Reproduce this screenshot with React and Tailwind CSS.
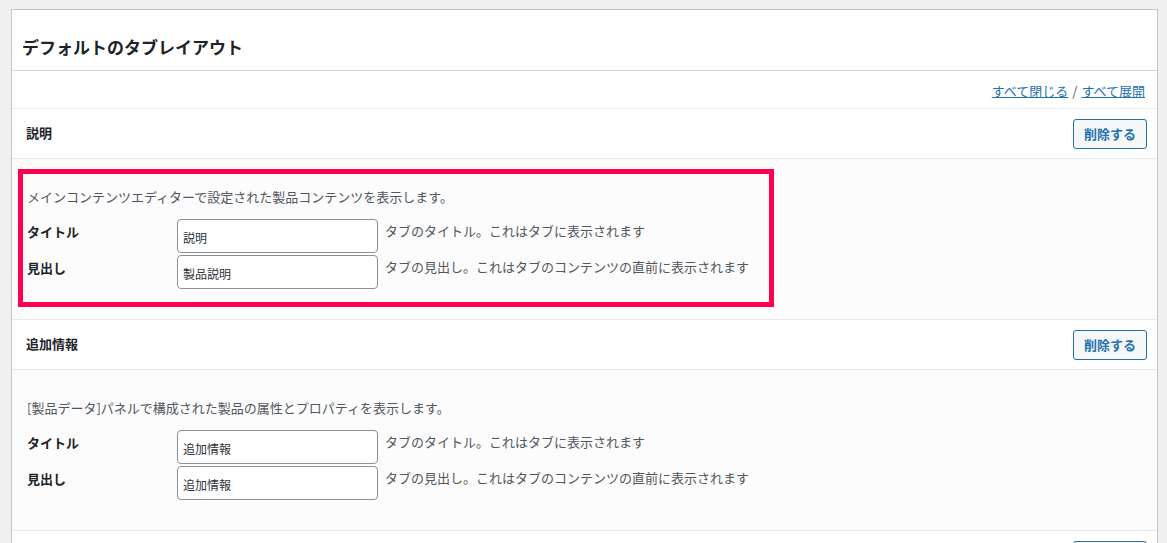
import React from "react";

const font = { fontFamily: '"Noto Sans CJK JP", "Noto Sans", sans-serif' };

function Row({ label, value, help }) {
  return (
    <div className="flex items-start">
      <div className="w-[150px] shrink-0 pt-[3px] text-[13px] leading-[20px] font-bold text-[#1d2327]">
        {label}
      </div>
      <input
        readOnly
        value={value}
        className="w-[201px] h-[34px] shrink-0 border border-[#8c8f94] rounded-[4px] bg-white px-[5px] pt-[2px] text-[12px] text-[#2c3338] outline-none"
        style={font}
      />
      <div className="ml-[7px] pt-[2px] text-[13px] leading-[20px] text-[#50575e]">{help}</div>
    </div>
  );
}

function Section({ title, desc, titleValue, headingValue, highlight }) {
  return (
    <div>
      <div className="h-[50px] flex items-center justify-between pl-[14px] pr-[10px] border-b border-[#e8e8e8] bg-white">
        <div className="text-[13px] leading-[20px] font-bold text-[#1d2327] -mt-[2px]">{title}</div>
        <button className="h-[30px] px-[10px] border border-[#2271b1] rounded-[3px] bg-[#f6f7f7] text-[13px] font-bold text-[#2271b1] leading-[20px]">
          削除する
        </button>
      </div>
      <div className="relative bg-[#fcfcfc] border-b border-[#e8e8e8] pl-[15px] pt-[28px] pb-[30px]">
        <p className="text-[13px] leading-[20px] text-[#50575e]">{desc}</p>
        <div className="mt-[12px] flex flex-col gap-[2px]">
          <Row label="タイトル" value={titleValue} help="タブのタイトル。これはタブに表示されます" />
          <Row label="見出し" value={headingValue} help="タブの見出し。これはタブのコンテンツの直前に表示されます" />
        </div>
        {highlight && (
          <div className="absolute left-[6px] top-[10px] w-[756px] h-[138px] border-[5px] border-[#ff0050] pointer-events-none" />
        )}
      </div>
    </div>
  );
}

export default function App() {
  return (
    <div className="h-screen overflow-hidden bg-[#f0f0f1] pt-[9px] pl-[11px] pr-[9px]" style={font}>
      <div className="bg-white border border-[#c3c4c7]">
        <div className="border-b border-[#d4d5d8] pl-[10px] pt-[27px] pb-[13px]">
          <h2 className="text-[17px] leading-[20px] font-semibold text-[#1d2327]">デフォルトのタブレイアウト</h2>
        </div>
        <div className="flex justify-end border-b border-[#ececec] pr-[12px] pt-[10px] pb-[7px] text-[13px] leading-[20px]">
          <a href="#" className="text-[#2271b1] underline">すべて閉じる</a>
          <span className="text-[#50575e] px-[4px]">/</span>
          <a href="#" className="text-[#2271b1] underline">すべて展開</a>
        </div>
        <Section
          title="説明"
          desc="メインコンテンツエディターで設定された製品コンテンツを表示します。"
          titleValue="説明"
          headingValue="製品説明"
          highlight
        />
        <Section
          title="追加情報"
          desc="[製品データ]パネルで構成された製品の属性とプロパティを表示します。"
          titleValue="追加情報"
          headingValue="追加情報"
        />
        <div className="h-[50px] flex items-center justify-end pr-[10px] bg-white">
          <div aria-label="削除する" className="w-[74px] h-[30px] border border-[#2271b1] rounded-[3px] bg-[#f6f7f7]" />
        </div>
      </div>
    </div>
  );
}
